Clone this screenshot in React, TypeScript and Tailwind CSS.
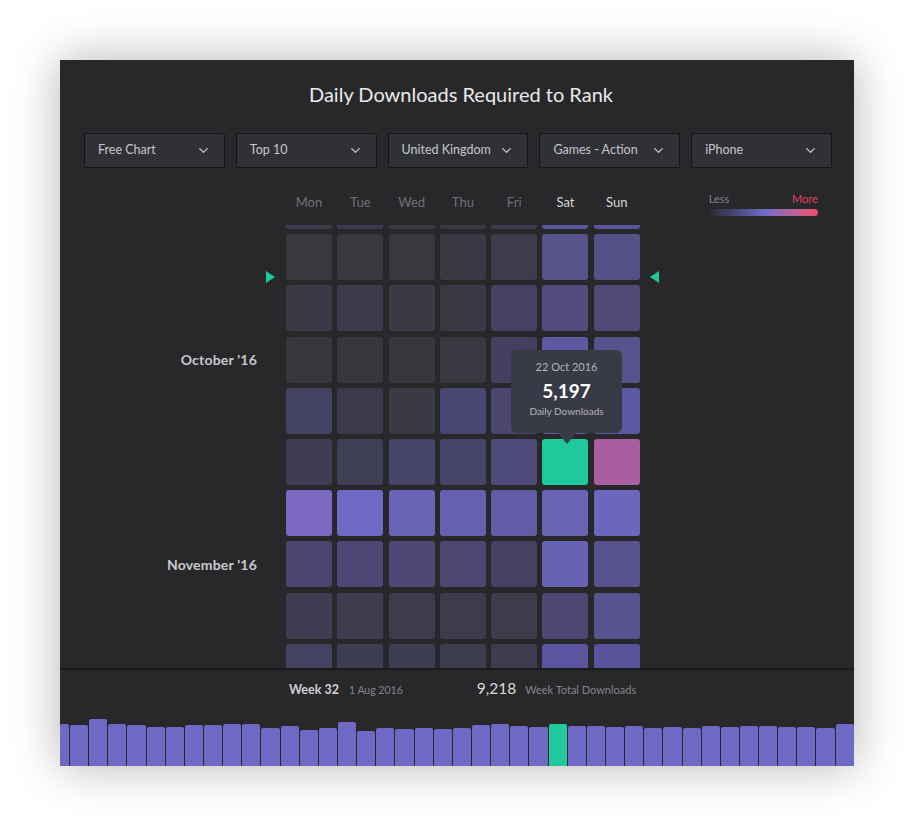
import { ChevronDown } from "lucide-react";

const filters = ["Free Chart", "Top 10", "United Kingdom", "Games - Action", "iPhone"];
const days = ["Mon", "Tue", "Wed", "Thu", "Fri", "Sat", "Sun"];

// heat colours per week row, Mon..Sun
const weeks: { label?: string; cells: string[] }[] = [
  { cells: ["bg-[#3c3c4c]", "bg-[#3c3c4c]", "bg-[#3a3a45]", "bg-[#3a3a45]", "bg-[#3b3b49]", "bg-[#5b56a0]", "bg-[#5a559c]"] },
  { cells: ["bg-[#38383f]", "bg-[#38383f]", "bg-[#38383f]", "bg-[#393a44]", "bg-[#3d3c4d]", "bg-[#57528a]", "bg-[#545186]"] },
  { cells: ["bg-[#393a46]", "bg-[#3b3b4c]", "bg-[#393a43]", "bg-[#393a43]", "bg-[#454264]", "bg-[#524d7e]", "bg-[#4f4a78]"] },
  { label: "October '16", cells: ["bg-[#37373d]", "bg-[#37373e]", "bg-[#37373e]", "bg-[#393942]", "bg-[#433f5e]", "bg-[#5e59a0]", "bg-[#57528c]"] },
  { cells: ["bg-[#444262]", "bg-[#3c3b4b]", "bg-[#3a3a44]", "bg-[#484673]", "bg-[#4a4670]", "bg-[#5e59a2]", "bg-[#5d58a2]"] },
  { cells: ["bg-[#3f3d53]", "bg-[#3e3e54]", "bg-[#48456a]", "bg-[#47446a]", "bg-[#4e4a7a]", "bg-[#1ec99c]", "bg-[#a85ea0]"] },
  { cells: ["bg-[#7b68c0]", "bg-[#6e69c2]", "bg-[#6964b6]", "bg-[#6660b0]", "bg-[#625ca6]", "bg-[#6964b6]", "bg-[#6b66be]"] },
  { label: "November '16", cells: ["bg-[#4a4670]", "bg-[#4c4873]", "bg-[#4d4974]", "bg-[#4c4872]", "bg-[#454263]", "bg-[#6862b4]", "bg-[#58528e]"] },
  { cells: ["bg-[#3e3d51]", "bg-[#3d3d4f]", "bg-[#3d3d4f]", "bg-[#3c3c4d]", "bg-[#3c3c4b]", "bg-[#4c4872]", "bg-[#58538e]"] },
  { cells: ["bg-[#434260]", "bg-[#3e3e52]", "bg-[#3e3e52]", "bg-[#3d3d50]", "bg-[#3d3d4f]", "bg-[#5b55a0]", "bg-[#58539a]"] },
];

const bars = [
  42, 41, 47, 42, 41, 39, 39, 41, 41, 42, 42, 38, 40, 36, 38, 44, 35, 38, 37, 38, 37,
  38, 41, 42, 40, 39, 42, 40, 40, 39, 40, 38, 39, 38, 40, 39, 40, 40, 39, 39, 38, 42,
];
const activeBar = 26;

function Triangle({ dir }: { dir: "left" | "right" }) {
  return (
    <svg width="9" height="12" viewBox="0 0 9 12">
      <polygon points={dir === "right" ? "0,0 9,6 0,12" : "9,0 0,6 9,12"} fill="#1ec99c" />
    </svg>
  );
}

export default function App() {
  return (
    <div
      className="w-[914px] h-[826px] bg-white pl-[60px] pt-[60px]"
      style={{ fontFamily: "Lato, 'Open Sans', sans-serif" }}
    >
      <div className="w-[794px] h-[706px] bg-[#28282b] flex flex-col shadow-[0_0_45px_rgba(0,0,0,0.3)] overflow-hidden">
        <h1 className="pt-[21px] pl-[8px] text-center text-[20px] leading-[26px] text-[#e8e8ea]">
          Daily Downloads Required to Rank
        </h1>

        <div className="mt-[26px] pl-6 pr-[22px] flex gap-[11px]">
          {filters.map((f) => (
            <div
              key={f}
              className="flex-1 h-[35px] flex items-center justify-between pl-[13px] pr-[13px] bg-[#303137] border border-[#151517] rounded-[2px] text-[12.5px] text-[#c6c6cb]"
            >
              <span>{f}</span>
              <ChevronDown size={15} strokeWidth={2} className="text-[#c8c8cc]" />
            </div>
          ))}
        </div>

        <div className="h-[57px] flex">
          <div className="w-[226px] shrink-0" />
          <div className="flex gap-[5.3px] pt-[24px]">
            {days.map((d, i) => (
              <div
                key={d}
                className={`w-[46px] text-center text-[13px] leading-[20px] ${
                  i >= 5 ? "text-[#d6d6da]" : "text-[#6f6f78]"
                }`}
              >
                {d}
              </div>
            ))}
          </div>
          <div className="ml-[69px] w-[109px] pt-[24px]">
            <div className="flex justify-between text-[11px] leading-[14px]">
              <span className="text-[#85858f]">Less</span>
              <span className="text-[#e2425f]">More</span>
            </div>
            <div className="mt-[3px] h-[7px] rounded-full bg-linear-to-r from-[#2a2a31] via-[#6b69c9] to-[#f4466a]" />
          </div>
        </div>

        <div className="relative h-[443px] overflow-hidden">
          <div className="mt-[-42px] flex flex-col gap-[5.2px]">
            {weeks.map((w, r) => (
              <div key={r} className="flex items-center">
                <div className="w-[226px] shrink-0 pr-[29px] text-right text-[14px] font-bold text-[#c9c9ce] tracking-[0.2px]">
                  {w.label}
                </div>
                <div className="flex gap-[5.3px]">
                  {w.cells.map((c, i) => (
                    <div key={i} className={`w-[46px] h-[46px] rounded-[3px] ${c}`} />
                  ))}
                </div>
              </div>
            ))}
          </div>

          <div className="absolute left-[206px] top-[46px]">
            <Triangle dir="right" />
          </div>
          <div className="absolute left-[590px] top-[46px]">
            <Triangle dir="left" />
          </div>

          <div className="absolute left-[451px] top-[125px] w-[111px] h-[83px] rounded-[6px] bg-[#383a45] text-center">
            <div className="pt-[10px] text-[11px] leading-[14px] text-[#b4b4bc]">22 Oct 2016</div>
            <div className="mt-[5px] text-[19px] leading-[24px] font-bold text-white">5,197</div>
            <div className="mt-[2px] text-[10px] leading-[12px] text-[#b4b4bc]">Daily Downloads</div>
            <div className="absolute top-full left-1/2 -translate-x-1/2 w-0 h-0 border-x-[9px] border-x-transparent border-t-[11px] border-t-[#383a45]" />
          </div>
        </div>

        <div className="h-[2px] bg-[#1b1b1d]" />

        <div className="flex-1 flex flex-col">
          <div className="pt-[8px] pl-[229px] flex items-baseline leading-[20px]">
            <span className="text-[12.5px] font-bold text-[#cfcfd4]">Week 32</span>
            <span className="ml-[10px] text-[10.5px] text-[#85858e]">1 Aug 2016</span>
            <span className="ml-[74px] text-[15.5px] text-[#dadade]">9,218</span>
            <span className="ml-[9px] text-[11px] text-[#85858e]">Week Total Downloads</span>
          </div>
          <div className="mt-auto h-[48px] flex items-end gap-px">
            {bars.map((h, i) => (
              <div
                key={i}
                className={`rounded-t-[2px] ${i === 0 ? "w-[9px] shrink-0" : "flex-1"} ${
                  i === activeBar ? "bg-[#1fc99b]" : "bg-[#6e69c5]"
                }`}
                style={{ height: h }}
              />
            ))}
          </div>
        </div>
      </div>
    </div>
  );
}
